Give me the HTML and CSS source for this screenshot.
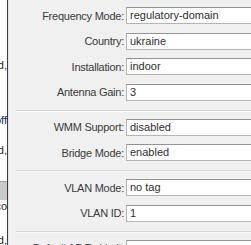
FILE: index.html
```html
<!DOCTYPE html>
<html>
<head>
<meta charset="utf-8">
<link rel="stylesheet" href="styles.css">
</head>
<body>
<div class="screen">
  <div class="side">
    <div class="side-gap g1"></div>
    <div class="side-line"><span>configured,</span></div>
    <div class="side-gap g2"></div>
    <div class="side-line"><span>off</span></div>
    <div class="side-gap g3"></div>
    <div class="side-line"><span>configured,</span></div>
    <div class="side-gap g4"></div>
    <div class="side-head"></div>
    <div class="side-line"><span>co</span></div>
    <div class="side-gap g5"></div>
    <div class="side-line"><span>d,</span></div>
  </div>
  <div class="divider"></div>
  <div class="panel">
    <div class="group">
      <div class="row"><span class="label">Frequency Mode:</span><span class="field">regulatory-domain</span></div>
      <div class="row"><span class="label">Country:</span><span class="field">ukraine</span></div>
      <div class="row"><span class="label">Installation:</span><span class="field">indoor</span></div>
      <div class="row"><span class="label">Antenna Gain:</span><span class="field">3</span></div>
    </div>
    <div class="sep"></div>
    <div class="group">
      <div class="row"><span class="label">WMM Support:</span><span class="field">disabled</span></div>
      <div class="row"><span class="label">Bridge Mode:</span><span class="field">enabled</span></div>
    </div>
    <div class="sep"></div>
    <div class="group">
      <div class="row"><span class="label">VLAN Mode:</span><span class="field">no tag</span></div>
      <div class="row"><span class="label">VLAN ID:</span><span class="field">1</span></div>
    </div>
    <div class="sep"></div>
    <div class="group">
      <div class="row"><span class="label">Default AP Tx Limit:</span><span class="field"></span></div>
    </div>
  </div>
</div>
</body>
</html>
```
FILE: styles.css
```css
html, body {
  margin: 0;
  padding: 0;
  overflow: hidden;
  background: #ffffff;
}
.screen {
  display: flex;
  width: 251px;
  height: 245px;
  overflow: hidden;
  font-family: "Liberation Sans", Arial, sans-serif;
  font-size: 11px;
  color: #333333;
}
.side {
  width: 7px;
  flex: none;
  background: #ffffff;
  overflow: hidden;
  display: flex;
  flex-direction: column;
}
.side-line {
  height: 13px;
  line-height: 13px;
  width: 7px;
  flex: none;
  display: flex;
  justify-content: flex-end;
  color: #222222;
}
.side-line span {
  flex: none;
  white-space: nowrap;
}
.side-gap { width: 7px; flex: none; }
.g1 { height: 59px; }
.g2 { height: 42px; }
.g3 { height: 17px; }
.g4 { height: 24px; }
.g5 { height: 21px; }
.side-head {
  width: 7px;
  flex: none;
  height: 18px;
  background: #c8c8c8;
  border-top: 1px solid #a0a0a0;
}
.divider {
  width: 1px;
  flex: none;
  background: #3c3c3c;
  border-right: 1px solid #e4e4e4;
}
.panel {
  flex: none;
  width: 300px;
  background: #f0f0f0;
  padding-top: 7px;
}
.group {
  display: flex;
  flex-direction: column;
  gap: 8.5px;
}
.row {
  display: grid;
  grid-template-columns: 115px 200px;
  column-gap: 2px;
  align-items: center;
}
.label {
  text-align: right;
  white-space: nowrap;
  letter-spacing: -0.25px;
  color: #3a3a3a;
}
.field {
  display: block;
  height: 15px;
  line-height: 15px;
  border: 1px solid #b4b4b4;
  border-top-color: #929292;
  background: #ffffff;
  padding: 0 3px;
  color: #2e2e2e;
  white-space: nowrap;
}
.sep {
  margin: 9px 0 7px 7px;
  height: 1px;
  background: #d6d6d6;
  border-bottom: 1px solid #fafafa;
}
```
